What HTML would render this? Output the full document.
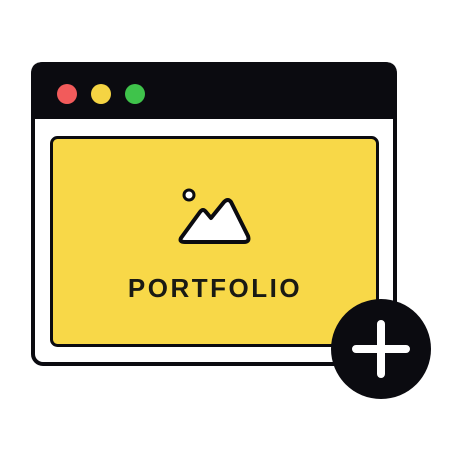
<!DOCTYPE html>
<html><head><style>
body{margin:0;width:462px;height:462px;background:#fff;overflow:hidden;position:relative}
</style></head><body>
<svg width="462" height="462" viewBox="0 0 462 462" style="position:absolute;left:0;top:0">
  <rect x="33" y="64" width="362" height="300" rx="10" fill="#fff" stroke="#0b0b10" stroke-width="4"/>
  <path d="M31 74 Q31 62 43 62 H385 Q397 62 397 74 V119 H31 Z" fill="#0b0b10"/>
  <circle cx="67" cy="94" r="10" fill="#f25b5b"/>
  <circle cx="101" cy="94" r="10" fill="#f5d443"/>
  <circle cx="135" cy="94" r="10" fill="#3fc34b"/>
  <rect x="51.5" y="137.5" width="326" height="208" rx="6" fill="#f8d848" stroke="#0b0b10" stroke-width="3"/>
  <circle cx="189" cy="195" r="5" fill="#fff" stroke="#0b0b10" stroke-width="3"/>
  <path d="M181 238 L200 212 Q203 208 206 212 L211 218 L224 202 Q228 198 231 202 L248 236 Q250 242 244 242 H185 Q179 242 181 238 Z" fill="#fff" stroke="#0b0b10" stroke-width="4" stroke-linejoin="round"/>
  <text x="215" y="297" text-anchor="middle" font-family="Liberation Sans, sans-serif" font-weight="bold" font-size="26" letter-spacing="2.5" fill="#1a1a14">PORTFOLIO</text>
  <circle cx="381" cy="349" r="50" fill="#0b0b10"/>
  <path d="M381 324 V374 M356 349 H406" stroke="#fff" stroke-width="8" stroke-linecap="round"/>
</svg>
</body></html>
